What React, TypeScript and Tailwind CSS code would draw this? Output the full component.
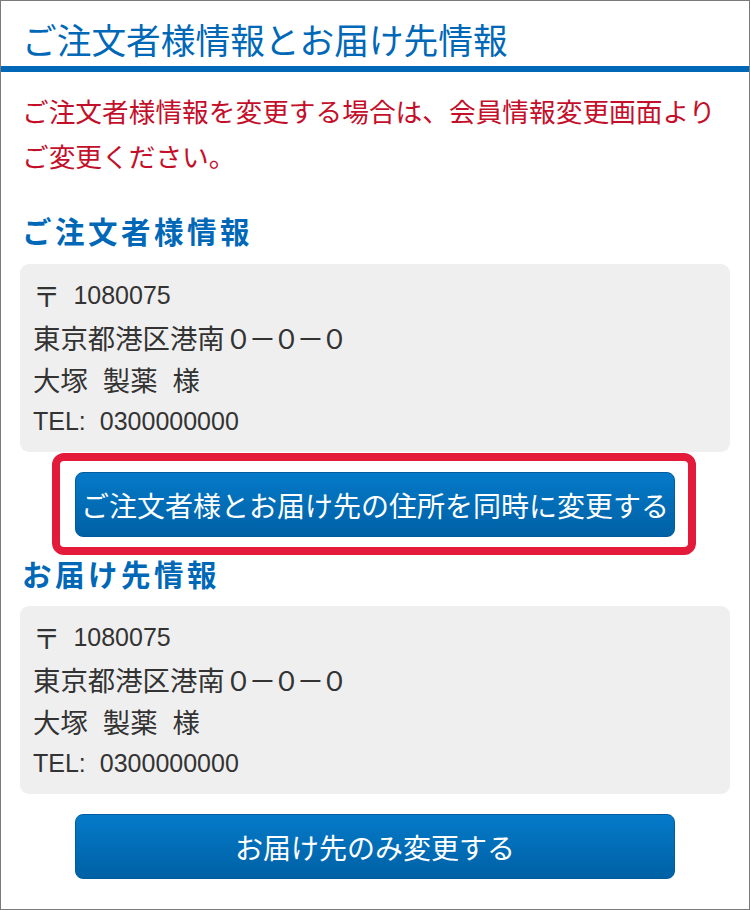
import React from 'react';

const jp = "font-['Noto_Sans_CJK_JP',sans-serif]";
const latin = "font-['Liberation_Sans','Noto_Sans_CJK_JP',sans-serif] text-[25px]";

const btn =
    'w-[600px] h-[65px] rounded-[8px] border border-[#005c9e] bg-gradient-to-b from-[#057ac9] to-[#0061a5] text-white text-[28px] leading-none flex items-center justify-center';

const line = 'h-[42px] flex items-center';

function AddressBox({ zip, addr, name, tel }: { zip: string; addr: string; name: string[]; tel: string }) {
    return (
        <div className="mx-[19px] rounded-[9px] bg-[#efefef] px-[13px] py-[10px] text-[27.4px] leading-[42px] text-[#333]">
            <div className={line}>
                <span>〒</span>
                <span className={`${latin} ml-[13px]`}>{zip}</span>
            </div>
            <div className={line}>
                {addr}
                <span className="tracking-[-3.4px]">０－０－０</span>
            </div>
            <div className={`${line} gap-[15px]`}>
                {name.map(n => (
                    <span key={n}>{n}</span>
                ))}
            </div>
            <div className={`${line} ${latin}`}>
                TEL:<span className="ml-[14px]">{tel}</span>
            </div>
        </div>
    );
}

export default function App() {
    return (
        <div className={`${jp} w-[750px] h-[910px] border border-[#7a7a7a] bg-white`}>
            <h1 className="pl-[21px] pt-[12px] text-[34.7px] leading-[53px] text-[#0068b7] font-normal">
                ご注文者様情報とお届け先情報
            </h1>
            <div className="h-[6px] bg-[#0068b7]" />

            <p className="pl-[21px] pt-[16px] text-[26.7px] leading-[45px] text-[#c40f2b]">
                ご注文者様情報を変更する場合は、会員情報変更画面より
                <br />
                ご変更ください。
            </p>

            <h2 className="mt-[32px] pl-[21px] text-[29.5px] leading-[40px] tracking-[3.5px] font-bold text-[#0068b7]">
                ご注文者様情報
            </h2>
            <div className="mt-[14px]">
                <AddressBox zip="1080075" addr="東京都港区港南" name={['大塚', '製薬', '様']} tel="0300000000" />
            </div>

            <div className="mt-[20px] flex justify-center">
                <div className="relative">
                    <button className={btn}>ご注文者様とお届け先の住所を同時に変更する</button>
                    <div className="absolute left-[-23px] right-[-21px] top-[-19px] bottom-[-18px] rounded-[12px] border-[8px] border-[#e31a3a] pointer-events-none" />
                </div>
            </div>

            <h2 className="mt-[16px] pl-[21px] text-[29.5px] leading-[40px] tracking-[3.5px] font-bold text-[#0068b7]">
                お届け先情報
            </h2>
            <div className="mt-[13px]">
                <AddressBox zip="1080075" addr="東京都港区港南" name={['大塚', '製薬', '様']} tel="0300000000" />
            </div>

            <div className="mt-[20px] flex justify-center">
                <button className={btn}>お届け先のみ変更する</button>
            </div>
        </div>
    );
}
